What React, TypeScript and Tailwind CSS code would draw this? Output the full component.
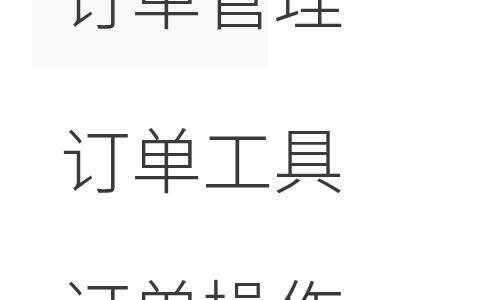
import React from "react";

const font = { fontFamily: '"Noto Sans CJK SC", "Noto Sans", sans-serif' };

export default function App() {
  return (
    <div className="w-[480px] h-[300px] overflow-hidden bg-white" style={font}>
      <div className="flex flex-col -mt-[84px] blur-[0.6px]">
        <div className="ml-[32px] w-[236px] h-[152px] bg-[#f8f8f8] flex items-center pl-[28px] whitespace-nowrap text-[71px] leading-none font-light text-[#3a3a3a]">
          订单管理
        </div>
        <div className="h-[160px] pt-[16px] flex items-center pl-[60px] whitespace-nowrap text-[71px] leading-none font-light text-[#3a3a3a]">
          订单工具
        </div>
        <div className="h-[160px] flex items-center pl-[60px] whitespace-nowrap text-[71px] leading-none font-light text-[#3a3a3a]">
          订单操作
        </div>
      </div>
    </div>
  );
}
